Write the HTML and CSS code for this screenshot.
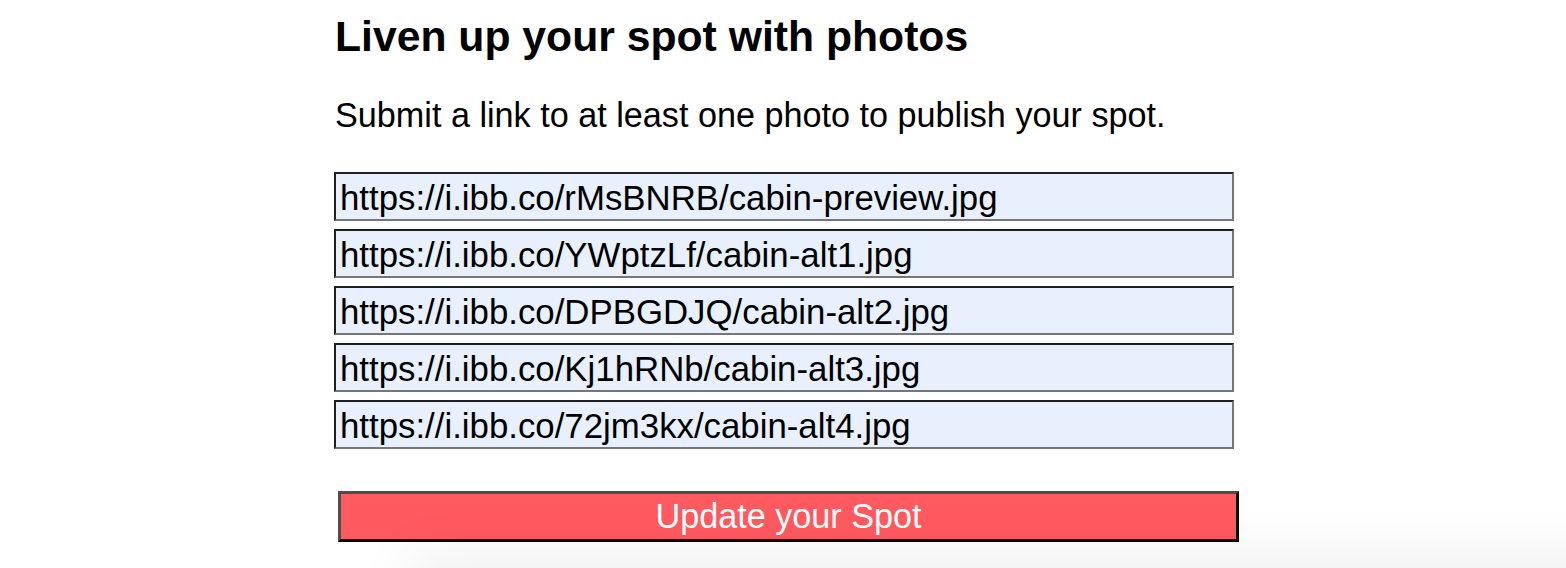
FILE: index.html
```html
<!DOCTYPE html>
<html lang="en">
<head>
<meta charset="utf-8">
<title>Liven up your spot with photos</title>
<link rel="stylesheet" href="styles.css">
</head>
<body>
<main class="page">
  <form class="photo-form">
    <h1 class="title">Liven up your spot with photos</h1>
    <p class="lead">Submit a link to at least one photo to publish your spot.</p>
    <div class="url-list">
      <input class="url-input" type="text" value="https://i.ibb.co/rMsBNRB/cabin-preview.jpg">
      <input class="url-input" type="text" value="https://i.ibb.co/YWptzLf/cabin-alt1.jpg">
      <input class="url-input" type="text" value="https://i.ibb.co/DPBGDJQ/cabin-alt2.jpg">
      <input class="url-input" type="text" value="https://i.ibb.co/Kj1hRNb/cabin-alt3.jpg">
      <input class="url-input" type="text" value="https://i.ibb.co/72jm3kx/cabin-alt4.jpg">
    </div>
    <button class="submit-btn" type="button">Update your Spot</button>
  </form>
</main>
<div class="footer-shadow"></div>
</body>
</html>
```

FILE: styles.css
```css
html, body {
  margin: 0;
  padding: 0;
  background: #ffffff;
}

body {
  font-family: "Liberation Sans", Arial, Helvetica, sans-serif;
  color: #000000;
  overflow: hidden;
  height: 568px;
}

.page {
  display: flex;
  justify-content: center;
}

.photo-form {
  width: 900px;
  display: flex;
  flex-direction: column;
  align-items: flex-start;
}

.title {
  margin: 12px 0 0 2px;
  font-size: 42.7px;
  font-weight: 700;
  line-height: 49px;
}

.lead {
  margin: 35px 0 0 2px;
  font-size: 34.2px;
  line-height: 39px;
}

.url-list {
  margin-top: 37px;
  margin-left: 1px;
  display: flex;
  flex-direction: column;
  gap: 8px;
}

.url-input {
  box-sizing: border-box;
  width: 900px;
  height: 49px;
  margin: 0;
  padding: 2px 4px 0 4px;
  font-family: "Liberation Sans", Arial, Helvetica, sans-serif;
  font-size: 34.8px;
  color: #000000;
  background: #e8f0fe;
  border-style: solid;
  border-width: 2px;
  border-color: #1f1f1f #767676 #767676 #1f1f1f;
  outline: none;
}

.submit-btn {
  box-sizing: border-box;
  margin: 42px 0 0 5px;
  width: 901px;
  height: 51px;
  padding: 0;
  font-family: "Liberation Sans", Arial, Helvetica, sans-serif;
  font-size: 34.2px;
  color: #ffffff;
  background: #ff5a5f;
  border-style: solid;
  border-width: 3px;
  border-color: #4d4d4d #000000 #000000 #4d4d4d;
  line-height: 1;
  cursor: pointer;
}

.footer-shadow {
  position: fixed;
  left: 420px;
  right: -60px;
  bottom: -60px;
  height: 60px;
  box-shadow: 0 0 60px 10px rgba(0, 0, 0, 0.07);
  background: #f0f0f0;
}
```
